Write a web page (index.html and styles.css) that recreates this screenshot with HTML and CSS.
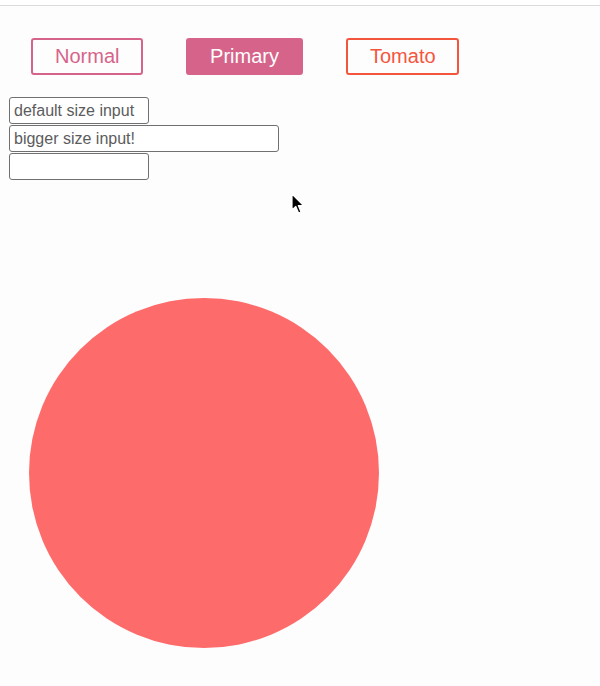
FILE: index.html
```html
<!DOCTYPE html>
<html>
<head>
<meta charset="utf-8">
<link rel="stylesheet" href="styles.css">
</head>
<body>
<div class="topbar"></div>
<div class="buttons">
  <button class="btn btn-normal">Normal</button>
  <button class="btn btn-primary">Primary</button>
  <button class="btn btn-tomato">Tomato</button>
</div>
<div class="inputs">
  <input class="field" type="text" value="default size input">
  <input class="field field-big" type="text" value="bigger size input!">
  <input class="field" type="text" value="">
</div>
<div class="stage">
  <div class="ball"></div>
</div>
<svg class="cursor" width="14" height="22" viewBox="0 0 14 22">
  <path d="M1 1 L1 17 L4.8 13.4 L7.6 20 L10 19 L7.3 12.6 L12.5 12.6 Z" fill="#000" stroke="#fff" stroke-width="1.2" stroke-linejoin="round"/>
</svg>
</body>
</html>
```

FILE: styles.css
```css
html, body {
  margin: 0;
  padding: 0;
  background: #fefdfe;
  font-family: "Liberation Sans", Arial, sans-serif;
}
body {
  position: relative;
  width: 600px;
  height: 686px;
  overflow: hidden;
}
.topbar {
  height: 5px;
  background: #ffffff;
  border-bottom: 1px solid #dcdadd;
}
.buttons {
  display: flex;
  gap: 43px;
  padding: 32px 0 0 31px;
}
.btn {
  font-family: "Liberation Sans", Arial, sans-serif;
  font-size: 20px;
  line-height: 23px;
  padding: 5px 22px;
  border: 2px solid #d6648a;
  border-radius: 3px;
  background: transparent;
  color: #d6648a;
  margin: 0;
}
.btn-normal { width: 112px; }
.btn-primary {
  width: 117px;
  background: #d6648a;
  color: #ffffff;
}
.btn-tomato {
  width: 113px;
  border-color: #f4553d;
  color: #f4553d;
}
.inputs {
  display: flex;
  flex-direction: column;
  align-items: flex-start;
  gap: 1px;
  padding: 22px 0 0 9px;
}
.field {
  box-sizing: border-box;
  width: 140px;
  height: 27px;
  margin: 0;
  padding: 0 4px;
  font-family: "Liberation Sans", Arial, sans-serif;
  font-size: 16px;
  color: #5c5c5c;
  background: #ffffff;
  border: 1px solid #707070;
  border-radius: 3px;
  outline: none;
}
.field-big {
  width: 270px;
}
.stage {
  padding: 118px 0 0 29px;
}
.ball {
  width: 350px;
  height: 350px;
  border-radius: 50%;
  background: #fe6b6b;
}
.cursor {
  position: absolute;
  left: 291px;
  top: 193px;
}
```
